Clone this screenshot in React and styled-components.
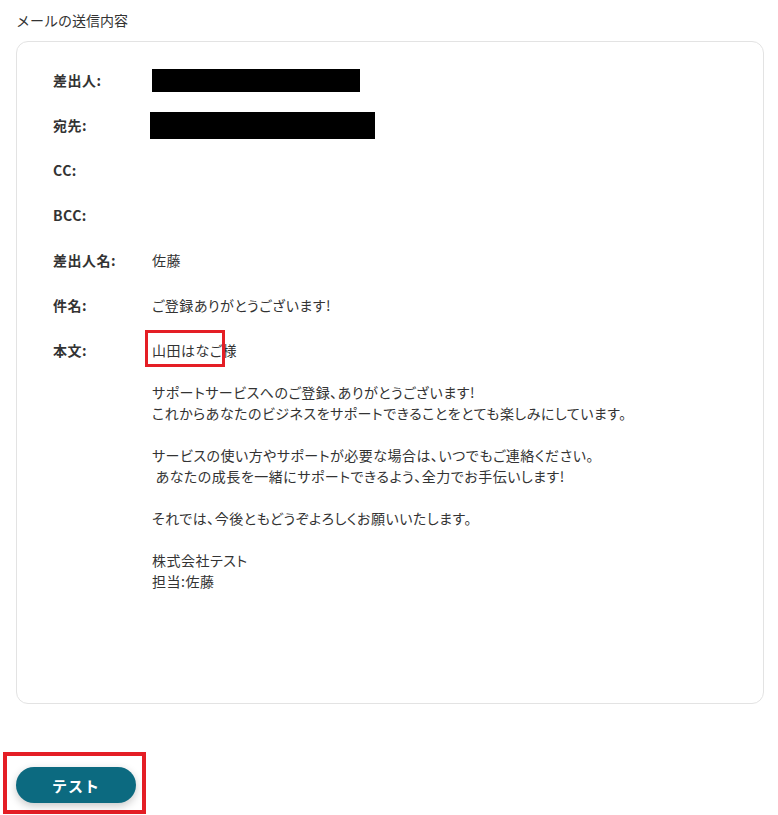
import React from 'react'
import styled, { createGlobalStyle } from 'styled-components';

const GlobalStyle = createGlobalStyle`
  body {
    margin: 0;
    background: #fff;
    font-family: "Noto Sans CJK JP", "Noto Sans", sans-serif;
    color: #333;
  }
`;

const Page = styled.div`
  padding: 11px 14px 2px 16px;
`;

const Title = styled.div`
  font-size: 14px;
  line-height: 18px;
  margin-bottom: 12px;
`;

const Card = styled.div`
  border: 1px solid #e3e3e3;
  border-radius: 12px;
  padding: 28px 36px 111px;
  display: flex;
  flex-direction: column;
  gap: 24px;
`;

const Row = styled.div`
  display: flex;
  align-items: ${p => (p.top ? 'flex-start' : 'center')};
  height: ${p => (p.top ? 'auto' : '21px')};
`;

const Label = styled.div`
  width: 99px;
  flex-shrink: 0;
  font-size: 14px;
  font-weight: 700;
  line-height: 21px;
  letter-spacing: 0.5px;
  color: #333;
`;

const Value = styled.div`
  font-size: 14px;
  line-height: 21px;
  font-feature-settings: "palt";
  letter-spacing: 0.5px;
  white-space: pre-wrap;
  color: #333;
`;

const Redacted = styled.div`
  flex-shrink: 0;
  background: #000;
  width: ${p => p.w}px;
  height: ${p => p.h}px;
  margin-left: ${p => p.offset || 0}px;
`;

const Mark = styled.span`
  position: relative;
  &::after {
    content: '';
    box-sizing: border-box;
    position: absolute;
    left: -7px;
    top: -10px;
    width: 80px;
    height: 37px;
    border: 3.5px solid #e41e25;
    pointer-events: none;
  }
`;

const ButtonFrame = styled.div`
  display: inline-block;
  margin: 48px 0 0 -13px;
  padding: 11px 6px 7px 9px;
  border: 4px solid #e41e25;
`;

const TestButton = styled.button`
  display: block;
  width: 120px;
  height: 36px;
  border: none;
  border-radius: 18px;
  background: #0c6a80;
  color: #fff;
  font-family: "Noto Sans CJK JP", sans-serif;
  font-size: 15px;
  font-weight: 700;
  letter-spacing: 1px;
  box-shadow: 0 3px 8px rgba(0, 0, 0, 0.22);
  cursor: pointer;
`;

const body = `
サポートサービスへのご登録、ありがとうございます!
これからあなたのビジネスをサポートできることをとても楽しみにしています。

サービスの使い方やサポートが必要な場合は、いつでもご連絡ください。
 あなたの成長を一緒にサポートできるよう、全力でお手伝いします!

それでは、今後ともどうぞよろしくお願いいたします。

株式会社テスト
担当:佐藤`;

export default function App() {
  return (
    <Page>
      <GlobalStyle />
      <Title>メールの送信内容</Title>
      <Card>
        <Row>
          <Label>差出人:</Label>
          <Redacted w={208} h={23} />
        </Row>
        <Row>
          <Label>宛先:</Label>
          <Redacted w={225} h={27} offset={-2} />
        </Row>
        <Row>
          <Label>CC:</Label>
        </Row>
        <Row>
          <Label>BCC:</Label>
        </Row>
        <Row>
          <Label>差出人名:</Label>
          <Value>佐藤</Value>
        </Row>
        <Row>
          <Label>件名:</Label>
          <Value>ご登録ありがとうございます!</Value>
        </Row>
        <Row top>
          <Label>本文:</Label>
          <Value><Mark>山田はなご</Mark>様{'\n'}{body}</Value>
        </Row>
      </Card>
      <ButtonFrame>
        <TestButton>テスト</TestButton>
      </ButtonFrame>
    </Page>
  );
}
